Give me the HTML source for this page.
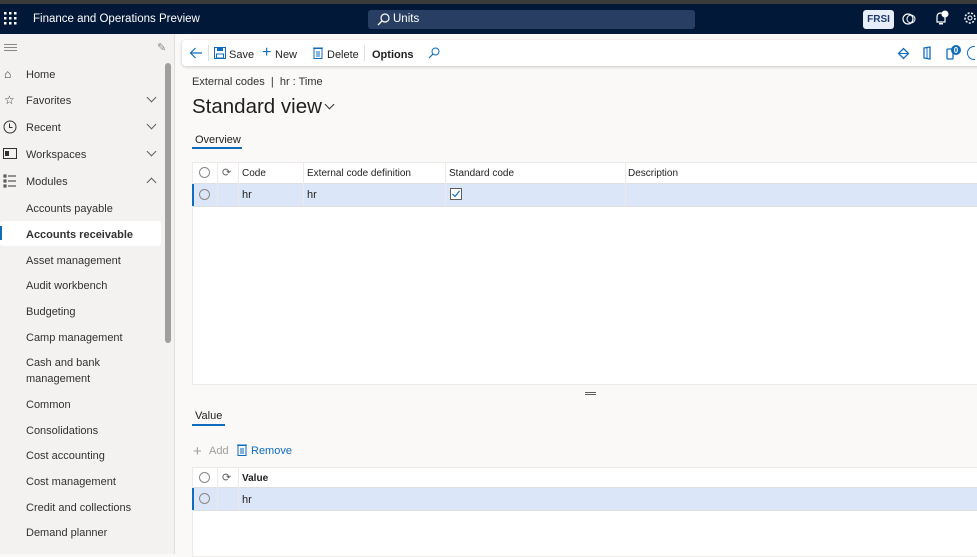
<!DOCTYPE html>
<html><head><meta charset="utf-8"><style>
*{margin:0;padding:0;box-sizing:border-box}
body{width:977px;height:554px;overflow:hidden;font-family:"Liberation Sans",sans-serif;font-size:11px;color:#201f1e;background:#faf9f8;position:relative}
.a{position:absolute;white-space:nowrap}
.top{left:0;top:0;width:977px;height:4px;background:#3b3b3b}
.nav{left:0;top:4px;width:977px;height:30px;background:#011838}
.side{left:0;top:34px;width:175px;height:520px;background:#f3f2f1;border-right:1px solid #e1dfdd}
.si{left:26px;font-size:11px;color:#323130}
.chev{left:148px;width:7px;height:7px;border-right:1px solid #605e5c;border-bottom:1px solid #605e5c;transform:rotate(45deg)}
.grid{background:#fff;border:1px solid #edebe9}
.hd{font-size:10px;color:#201f1e}
.rad{width:11px;height:11px;border:1px solid #8a8886;border-radius:50%}
.vl{width:1px;background:#edebe9}
.m1{margin-top:1px}
</style></head><body>
<div class="a top"></div>
<div class="a nav"></div>
<svg class="a" style="left:4px;top:12px" width="14" height="14"><g fill="#fff"><rect x="0" y="0" width="2.5" height="2.5"/><rect x="5" y="0" width="2.5" height="2.5"/><rect x="10" y="0" width="2.5" height="2.5"/><rect x="0" y="5" width="2.5" height="2.5"/><rect x="5" y="5" width="2.5" height="2.5"/><rect x="10" y="5" width="2.5" height="2.5"/><rect x="0" y="10" width="2.5" height="2.5"/><rect x="5" y="10" width="2.5" height="2.5"/><rect x="10" y="10" width="2.5" height="2.5"/></g></svg>
<div class="a" style="left:33px;top:13px;color:#fff;font-size:11.5px">Finance and Operations Preview</div>
<div class="a" style="left:368px;top:10px;width:327px;height:19px;background:#283f63;border-radius:3px"></div>
<svg class="a" style="left:377px;top:13px" width="13" height="13"><circle cx="8" cy="5" r="4" fill="none" stroke="#fff" stroke-width="1.2"/><line x1="5" y1="8" x2="1" y2="12" stroke="#fff" stroke-width="1.3"/></svg>
<div class="a" style="left:393px;top:13px;color:#fff;font-size:11.5px">Units</div>
<div class="a" style="left:863px;top:10px;width:31px;height:19px;background:#e8eef9;border-radius:3px;color:#1f3b6e;font-size:10px;font-weight:bold;text-align:center;line-height:19px">FRSI</div>
<svg class="a" style="left:902px;top:12px" width="14" height="14"><circle cx="6" cy="7" r="5" fill="none" stroke="#fff" stroke-width="1.2"/><circle cx="9" cy="7" r="4" fill="none" stroke="#fff" stroke-width="1"/></svg>
<svg class="a" style="left:934px;top:10px" width="16" height="16"><path d="M3 12 L3 7 Q3 3 7 3 Q11 3 11 7 L11 12 Z" fill="none" stroke="#fff" stroke-width="1.2"/><circle cx="11" cy="4" r="3.5" fill="#fff"/><rect x="5" y="13" width="4" height="1.5" fill="#fff"/></svg>
<svg class="a" style="left:963px;top:11px" width="14" height="14"><circle cx="7" cy="7" r="5" fill="none" stroke="#fff" stroke-width="1.5" stroke-dasharray="2 1.5"/><circle cx="7" cy="7" r="2" fill="none" stroke="#fff"/></svg>

<div class="a side"></div>
<div class="a" style="left:4px;top:44px;width:13px;height:1px;background:#8a8886;box-shadow:0 3px 0 #8a8886,0 6px 0 #8a8886"></div>
<div class="a" style="left:157px;top:41px;color:#8a8886;font-size:11px">✎</div>
<div class="a" style="left:165px;top:63px;width:6px;height:280px;background:#a19f9d;border-radius:3px"></div>
<div class="a" style="left:4px;top:67px;font-size:12px;color:#323130">⌂</div>
<div class="a" style="left:4px;top:93px;font-size:12px;color:#323130">☆</div>
<svg class="a" style="left:3px;top:120px" width="14" height="14"><circle cx="7" cy="7" r="6" fill="none" stroke="#323130"/><path d="M6.5 3.5V7.5H9.5" fill="none" stroke="#323130"/></svg>
<svg class="a" style="left:3px;top:148px" width="14" height="12"><rect x="0.5" y="0.5" width="13" height="10" fill="none" stroke="#323130"/><rect x="2" y="3" width="4" height="5" fill="#323130"/></svg>
<svg class="a" style="left:3px;top:174px" width="14" height="14"><g stroke="#323130"><rect x="1" y="1" width="2" height="2" fill="none"/><rect x="1" y="6" width="2" height="2" fill="none"/><rect x="1" y="11" width="2" height="2" fill="none"/><line x1="5" y1="2" x2="13" y2="2"/><line x1="5" y1="7" x2="13" y2="7"/><line x1="5" y1="12" x2="13" y2="12"/></g></svg>
<div class="a si" style="top:69px">Home</div>
<div class="a si" style="top:95px">Favorites</div><div class="a chev" style="top:94px"></div>
<div class="a si" style="top:122px">Recent</div><div class="a chev" style="top:121px"></div>
<div class="a si" style="top:149px">Workspaces</div><div class="a chev" style="top:148px"></div>
<div class="a si" style="top:176px">Modules</div><div class="a chev" style="top:179px;transform:rotate(225deg)"></div>
<div class="a" style="left:0;top:221px;width:161px;height:25px;background:#fff;border-radius:3px"></div>
<div class="a" style="left:0;top:226px;width:2px;height:14px;background:#0f6cbd"></div>
<div class="a si" style="top:203px">Accounts payable</div>
<div class="a si" style="top:229px;font-weight:bold">Accounts receivable</div>
<div class="a si" style="top:255px">Asset management</div>
<div class="a si" style="top:280px">Audit workbench</div>
<div class="a si" style="top:306px">Budgeting</div>
<div class="a si" style="top:332px">Camp management</div>
<div class="a si" style="top:357px">Cash and bank</div>
<div class="a si" style="top:373px">management</div>
<div class="a si" style="top:399px">Common</div>
<div class="a si" style="top:425px">Consolidations</div>
<div class="a si" style="top:450px">Cost accounting</div>
<div class="a si" style="top:476px">Cost management</div>
<div class="a si" style="top:502px">Credit and collections</div>
<div class="a si" style="top:527px">Demand planner</div>

<div class="a" style="left:182px;top:40px;width:800px;height:26px;background:#fff;border-radius:4px;box-shadow:0 1px 3px rgba(0,0,0,.2)"></div>
<svg class="a" style="left:189px;top:47px" width="14" height="12"><path d="M13 6 H1.5 M6.5 1 L1.5 6 L6.5 11" fill="none" stroke="#0f6cbd" stroke-width="1.2"/></svg>
<div class="a" style="left:208px;top:45px;width:1px;height:16px;background:#e1dfdd"></div>
<svg class="a" style="left:214px;top:47px" width="12" height="12"><rect x="0.5" y="0.5" width="11" height="11" fill="none" stroke="#0f6cbd"/><rect x="3" y="1" width="6" height="3" fill="#0f6cbd"/><rect x="2.5" y="7" width="7" height="4" fill="none" stroke="#0f6cbd"/></svg>
<div class="a" style="left:229px;top:49px;font-size:11px">Save</div>
<div class="a" style="left:262px;top:44px;color:#0f6cbd;font-size:16px">+</div>
<div class="a" style="left:275px;top:49px">New</div>
<svg class="a" style="left:313px;top:46px" width="10" height="13"><rect x="1" y="2.5" width="8" height="10" fill="none" stroke="#0f6cbd"/><line x1="0" y1="2" x2="10" y2="2" stroke="#0f6cbd"/><line x1="4" y1="5" x2="4" y2="11" stroke="#0f6cbd"/><line x1="6" y1="5" x2="6" y2="11" stroke="#0f6cbd"/></svg>
<div class="a" style="left:327px;top:49px">Delete</div>
<div class="a" style="left:364px;top:45px;width:1px;height:16px;background:#e1dfdd"></div>
<div class="a" style="left:372px;top:49px;font-weight:bold">Options</div>
<svg class="a" style="left:428px;top:47px" width="12" height="12"><circle cx="7.5" cy="4.5" r="3.5" fill="none" stroke="#0f6cbd"/><line x1="5" y1="7" x2="1" y2="11" stroke="#0f6cbd" stroke-width="1.2"/></svg>
<svg class="a" style="left:897px;top:47px" width="13" height="13"><rect x="3" y="3" width="7" height="7" transform="rotate(45 6.5 6.5)" fill="none" stroke="#0f6cbd" stroke-width="1.3"/><line x1="2" y1="6.5" x2="11" y2="6.5" stroke="#0f6cbd"/></svg>
<svg class="a" style="left:922px;top:46px" width="11" height="14"><path d="M2 2 L8 1 L8 13 L2 12 Z" fill="none" stroke="#0f6cbd" stroke-width="1.3"/><line x1="5" y1="2" x2="5" y2="12" stroke="#0f6cbd"/></svg>
<svg class="a" style="left:946px;top:44px" width="18" height="17"><rect x="1" y="5" width="6" height="10" rx="1" fill="none" stroke="#0f6cbd" stroke-width="1.3"/><circle cx="10" cy="6" r="5" fill="#0f6cbd"/><text x="10" y="9" font-size="8" fill="#fff" text-anchor="middle" font-family="Liberation Sans" font-weight="bold">0</text></svg>
<div class="a" style="left:967px;top:46px;width:8px;height:14px;border:1.3px solid #0f6cbd;border-right:none;border-radius:7px 0 0 7px"></div>

<div class="a" style="left:192px;top:76px;font-size:11px;color:#323130">External codes &nbsp;| &nbsp;hr : Time</div>
<div class="a" style="left:192px;top:95px;font-size:20.5px;color:#201f1e">Standard view</div>
<div class="a" style="left:326px;top:101px;width:7px;height:7px;border-right:1px solid #323130;border-bottom:1px solid #323130;transform:rotate(45deg)"></div>
<div class="a" style="left:195px;top:134px;font-size:11px">Overview</div>
<div class="a" style="left:192px;top:147px;width:50px;height:2px;background:#0f6cbd"></div>

<div class="a grid" style="left:192px;top:162px;width:790px;height:223px"></div>
<div class="a" style="left:193px;top:184px;width:790px;height:22px;background:#dbe6f8"></div>
<div class="a" style="left:192px;top:184px;width:2px;height:22px;background:#0f6cbd"></div>
<div class="a" style="left:193px;top:183px;width:790px;height:1px;background:#e1dfdd"></div>
<div class="a" style="left:193px;top:206px;width:790px;height:1px;background:#e1dfdd"></div>
<div class="a vl" style="left:217px;top:163px;height:43px"></div>
<div class="a vl" style="left:238px;top:163px;height:43px"></div>
<div class="a vl" style="left:303px;top:163px;height:43px"></div>
<div class="a vl" style="left:445px;top:163px;height:43px"></div>
<div class="a vl" style="left:625px;top:163px;height:43px"></div>
<div class="a rad" style="left:199px;top:167px"></div>
<div class="a" style="left:222px;top:166px;font-size:11px;color:#605e5c">⟳</div>
<div class="a hd" style="left:242px;top:168px">Code</div>
<div class="a hd" style="left:307px;top:168px">External code definition</div>
<div class="a hd" style="left:449px;top:168px">Standard code</div>
<div class="a hd" style="left:628px;top:168px">Description</div>
<div class="a rad" style="left:199px;top:189px"></div>
<div class="a" style="left:242px;top:189px">hr</div>
<div class="a" style="left:307px;top:189px">hr</div>
<svg class="a" style="left:450px;top:188px" width="12" height="12"><rect x="0.5" y="0.5" width="11" height="11" fill="#fff" stroke="#605e5c"/><path d="M2.5 6 L5 8.5 L9.5 3" fill="none" stroke="#0f6cbd" stroke-width="1.2"/></svg>

<div class="a" style="left:585px;top:392px;width:11px;height:1px;background:#605e5c;box-shadow:0 2px 0 #605e5c"></div>
<div class="a" style="left:195px;top:410px">Value</div>
<div class="a" style="left:192px;top:424px;width:33px;height:2px;background:#0f6cbd"></div>
<div class="a" style="left:193px;top:443px;color:#a19f9d;font-size:15px">+</div>
<div class="a" style="left:209px;top:445px;color:#a19f9d">Add</div>
<svg class="a" style="left:237px;top:443px" width="10" height="13"><rect x="1" y="2.5" width="8" height="10" fill="none" stroke="#0f6cbd"/><line x1="0" y1="2" x2="10" y2="2" stroke="#0f6cbd"/><line x1="4" y1="5" x2="4" y2="11" stroke="#0f6cbd"/><line x1="6" y1="5" x2="6" y2="11" stroke="#0f6cbd"/></svg>
<div class="a" style="left:251px;top:445px;color:#0f6cbd">Remove</div>

<div class="a grid" style="left:192px;top:467px;width:790px;height:90px"></div>
<div class="a" style="left:193px;top:488px;width:790px;height:22px;background:#dbe6f8"></div>
<div class="a" style="left:192px;top:488px;width:2px;height:22px;background:#0f6cbd"></div>
<div class="a" style="left:193px;top:487px;width:790px;height:1px;background:#e1dfdd"></div>
<div class="a" style="left:193px;top:510px;width:790px;height:1px;background:#e1dfdd"></div>
<div class="a vl" style="left:217px;top:468px;height:42px"></div>
<div class="a vl" style="left:238px;top:468px;height:42px"></div>
<div class="a rad" style="left:199px;top:472px"></div>
<div class="a" style="left:222px;top:471px;font-size:11px;color:#605e5c">⟳</div>
<div class="a hd" style="left:242px;top:473px;font-weight:bold">Value</div>
<div class="a rad" style="left:199px;top:493px"></div>
<div class="a" style="left:242px;top:494px">hr</div>
</body></html>
